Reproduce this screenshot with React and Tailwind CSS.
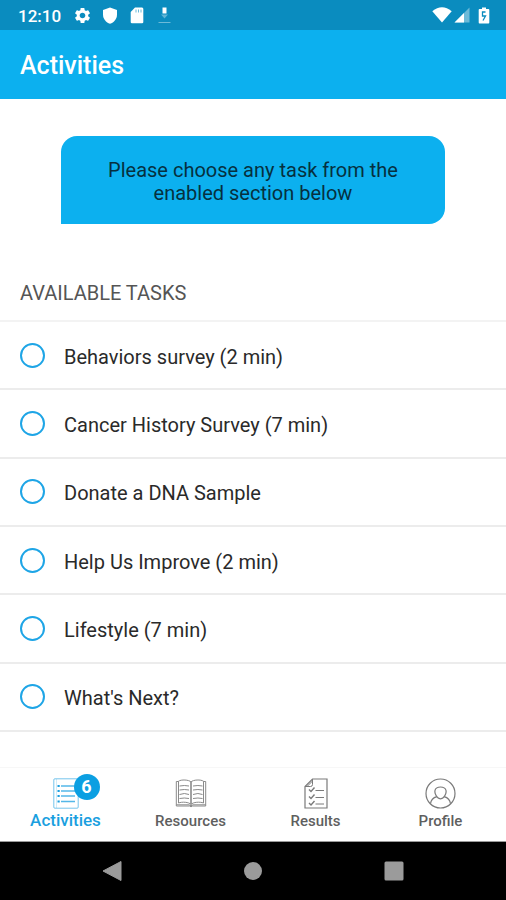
import React, { useState } from 'react';
import { MdSettings } from 'react-icons/md';

const tasks = [
    'Behaviors survey (2 min)',
    'Cancer History Survey (7 min)',
    'Donate a DNA Sample',
    'Help Us Improve (2 min)',
    'Lifestyle (7 min)',
    "What's Next?",
];

const ActivitiesIcon = () => (
    <svg width="26" height="31" viewBox="0 0 26 31" fill="none" stroke="#1a9fe0">
        <rect x="0.8" y="0.8" width="24.4" height="29.4" rx="1" strokeOpacity="0.6" />
        <path d="M3.5 1v29" strokeOpacity="0.2" />
        <path d="M8 8h14M8 13h14M8 18h14M8 23.5h14" strokeWidth="1.4" strokeOpacity="0.75" />
        <path d="M4.5 8h2.200M4.5 13h2.200M4.5 18h2.200M4.5 23.5h2.200" strokeWidth="2.2" />
    </svg>
);

const ResourcesIcon = () => (
    <svg width="32" height="30" viewBox="0 0 32 30" fill="none" stroke="#8a8a8a">
        <path d="M16 4C14 1.6 6 1.4 3.5 3.2V25C7 23.6 14 24 16 26.5C18 24 25 23.6 28.5 25V3.2C26 1.4 18 1.6 16 4Z" />
        <path d="M16 4v22.5" strokeWidth="1.6" />
        <path d="M3.5 3.5H1.3V28H14.5L16 28.8L17.5 28H30.7V3.5H28.5" />
        <path d="M1.3 26.8H14L16 27.8L18 26.8H30.7" />
        <path d="M4.5 8q5-1 9.5 0M4.5 12q5-1 9.500 0M4.5 16.500q5-2 9.500 0M4.5 20.500q5-1 9.500 0M18 8q5-1 9.500 0M18 12q5-1 9.500 0M18 16.500q5-2 9.500 0M18 20.500q5-1 9.500 0" />
    </svg>
);

const ResultsIcon = () => (
    <svg width="24" height="31" viewBox="0 0 24 31" fill="none" stroke="#7a7a7a">
        <path d="M8.5 1H23V30H1V8.5Z" strokeWidth="1.2" />
        <path d="M8.5 1V6.5Q8.5 8.5 6.5 8.5H1M3 8.5L8.5 3" />
        <path d="M11.5 12.5H20M11.5 19.5H20M11.5 26H20" />
        <path d="M5 11.5L7 13.5L10.5 9.5M5 18.5L7 20.5L10.5 16.5M5 25L7 27L10.5 23" strokeWidth="1.4" />
    </svg>
);

const ProfileIcon = () => (
    <svg width="31" height="31" viewBox="0 0 31 31" fill="none" stroke="#7a7a7a" strokeWidth="1.2">
        <circle cx="15.5" cy="15.5" r="14.5" />
        <path d="M12.5 19.5C8 14 9.5 9 15.5 9C21.5 9 23 14 18.5 19.5C16.8 21 14.2 21 12.500 19.500Z" />
        <path d="M5.500 25.8C6 21.5 8.500 19.500 11.8 18.6M25.500 25.800C25 21.500 22.500 19.500 19.200 18.600" />
    </svg>
);

const tabs = [
    { name: 'Activities', Icon: ActivitiesIcon, badge: 6 },
    { name: 'Resources', Icon: ResourcesIcon },
    { name: 'Results', Icon: ResultsIcon },
    { name: 'Profile', Icon: ProfileIcon },
];

const StatusBar = () => (
    <div className="flex h-[30px] items-center justify-between bg-[#0a8cbf] pl-[18px] pr-4 text-white">
        <div className="flex items-center">
            <span className="mr-3 pt-[2px] text-[17px] leading-6 font-medium">12:10</span>
            <MdSettings className="mr-[10px] size-[19px]" />
            <svg className="mr-3" width="16" height="17" viewBox="0 0 16 17" fill="currentColor">
                <path d="M8 0.5L15 3V7.5C15 12 12 15.5 8 16.8C4 15.5 1 12 1 7.5V3Z" />
            </svg>
            <svg className="mr-[14px]" width="14" height="17" viewBox="0 0 14 17" fill="currentColor">
                <path d="M5 0.5H12Q13.3 0.5 13.3 2V15Q13.3 16.3 12 16.3H2Q0.7 16.3 0.7 15V5Z" />
                <path d="M6 2.5v3M8.5 2.5v3M11 2.5v3" stroke="#0a8cbf" strokeOpacity="0.6" />
            </svg>
            <svg width="13" height="17" viewBox="0 0 13 17" fill="none" stroke="currentColor">
                <path d="M6.5 0.5V6.5" strokeWidth="4" />
                <path d="M3 7.5H10L6.5 11.5Z" fill="currentColor" stroke="none" opacity="0.35" />
                <path d="M0.5 15.5H12.5" opacity="0.4" />
            </svg>
        </div>
        <div className="flex items-center">
            <svg width="20" height="16" viewBox="0 0 20 16" fill="currentColor">
                <path d="M0.3 4.2Q10 -3.5 19.7 4.2L10 15.5Z" />
            </svg>
            <svg className="mr-2 ml-[2px]" width="16" height="16" viewBox="0 0 16 16" fill="currentColor">
                <path d="M15.5 0.5V15.5H0.5Z" opacity="0.4" />
                <path d="M10 6V15.5H0.5Z" />
            </svg>
            <svg width="12" height="17" viewBox="0 0 12 17" fill="currentColor">
                <path d="M4 0.5H8V2H10.5Q11.3 2 11.3 3V15.5Q11.3 16.5 10.5 16.5H1.5Q0.7 16.5 0.7 15.5V3Q0.7 2 1.5 2H4Z" />
                <path d="M7.500 5H4.500V9H7.500L5 13.500" fill="none" stroke="#0a8cbf" strokeWidth="1.3" />
            </svg>
        </div>
    </div>
);

const App = () => {
    const [selected, setSelected] = useState('');

    return (
        <div className="flex min-h-screen flex-col bg-white font-['Roboto',sans-serif]">
            <StatusBar />
            <header className="flex h-[69px] items-center bg-[#0cb0ef] px-5 pt-[2px]">
                <h1 className="text-[25px] leading-8 font-medium text-white">Activities</h1>
            </header>

            <main className="flex flex-1 flex-col">
                <p className="mx-[61px] mt-[37px] rounded-2xl rounded-bl-none bg-[#0cb0ef] px-10 pt-[23px] pb-[19px] text-center text-[20px] leading-[23px] text-[#06303f]">
                    Please choose any task from the enabled section below
                </p>

                <h2 className="mt-[57px] border-b-2 border-[#f3f3f3] px-5 pb-[15px] text-[20px] leading-6 text-[#555555]">AVAILABLE TASKS</h2>
                <ul className="mb-[35px] grid flex-1 auto-rows-fr">
                    {tasks.map((task) => (
                        <li key={task} className="border-b-2 border-[#ececec]">
                            <label className="flex h-full min-h-14 items-center gap-[19px] px-5 text-[20px] leading-6 text-[#2a2a2a]">
                                <input
                                    type="radio"
                                    name="task"
                                    value={task}
                                    checked={selected === task}
                                    onChange={(e) => setSelected(e.target.value)}
                                    className="size-[25px] shrink-0 appearance-none rounded-full border-2 border-[#1ea5e6] checked:bg-[#1ea5e6]"
                                />
                                <span className="pt-[3px]">{task}</span>
                            </label>
                        </li>
                    ))}
                </ul>
            </main>

            <nav className="grid grid-cols-4 border-t border-b border-t-[#f7f7f7] border-b-[#9a9a9a] px-[3px] pt-[9px] pb-2">
                {tabs.map(({ name, Icon, badge }) => (
                    <a
                        key={name}
                        href={'#' + name.toLowerCase()}
                        className={badge ? 'flex flex-col items-center text-[17px] leading-[22px] font-medium text-[#1a9fe0]' : 'flex flex-col items-center text-[15px] leading-6 font-medium text-[#5f5f5f]'}
                    >
                        <span className="relative flex h-8 items-center">
                            <Icon />
                            {badge && (
                                <span className="absolute -top-[3px] left-[21px] flex size-[26px] items-center justify-center rounded-full bg-[#0b9fe2] text-[18px] font-bold text-white">
                                    {badge}
                                </span>
                            )}
                        </span>
                        {name}
                    </a>
                ))}
            </nav>

            <div className="grid h-[58px] grid-cols-3 justify-items-center bg-black px-[42px] text-[#9b9b9b]">
                <button type="button" aria-label="Back">
                    <svg width="20" height="22" viewBox="0 0 20 22" fill="currentColor">
                        <path d="M19 1.5V20.5L1 11Z" stroke="currentColor" strokeLinejoin="round" />
                    </svg>
                </button>
                <button type="button" aria-label="Home">
                    <svg width="20" height="20" viewBox="0 0 20 20" fill="currentColor">
                        <circle cx="10" cy="10" r="9" />
                    </svg>
                </button>
                <button type="button" aria-label="Recents">
                    <svg width="20" height="20" viewBox="0 0 20 20" fill="currentColor">
                        <rect x="0.5" y="0.5" width="19" height="19" rx="1.5" />
                    </svg>
                </button>
            </div>
        </div>
    );
};

export default App;
